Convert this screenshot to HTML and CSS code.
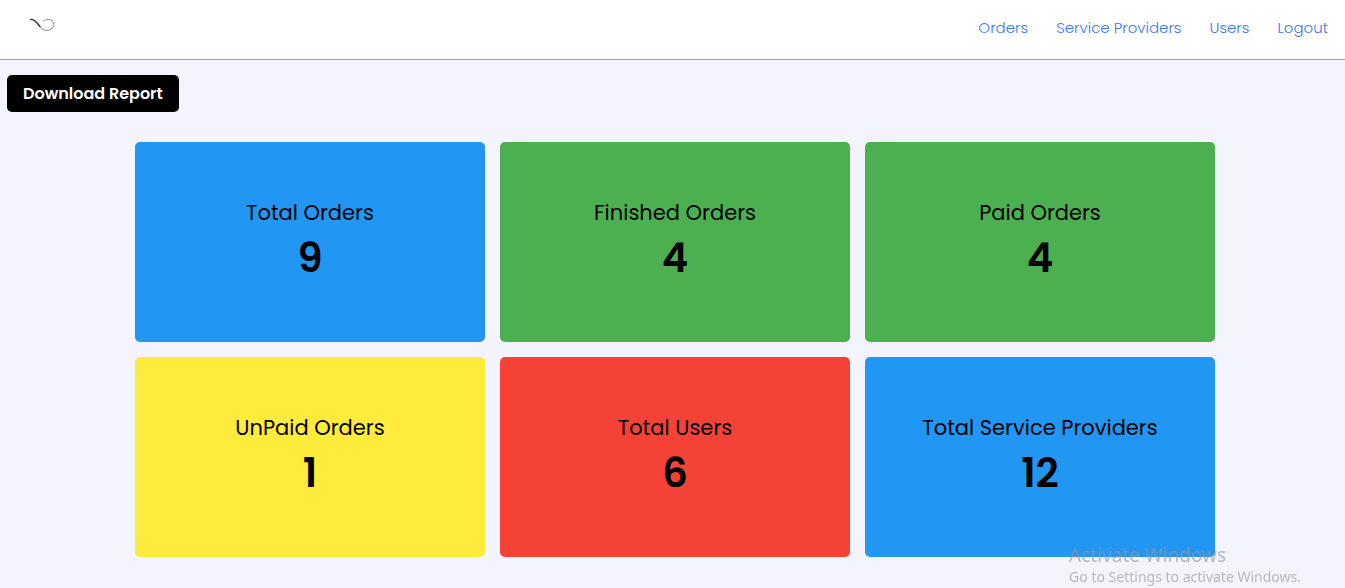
FILE: index.html
```html
<!DOCTYPE html>
<html lang="en">
<head>
  <meta charset="utf-8">
  <meta name="viewport" content="width=device-width, initial-scale=1">
  <title>Dashboard</title>
  <link rel="stylesheet" href="styles.css">
</head>
<body>
  <header class="navbar">
    <a class="logo" href="#" aria-label="Home">
      <svg width="28" height="18" viewBox="0 0 28 18" fill="none" stroke-linecap="round">
        <path d="M2.500 3.500C9 2.500 11 14.500 18.500 14.500C27.500 14.500 28 3.500 20 3.500C18 3.500 16.500 4 15.500 5" stroke="#888" stroke-width="1"/>
        <path d="M2.500 3.500C7 3 9 7 12 10.500" stroke="#333" stroke-width="1.300"/>
      </svg>
    </a>
    <nav class="links">
      <a href="#">Orders</a>
      <a href="#">Service Providers</a>
      <a href="#">Users</a>
      <a href="#">Logout</a>
    </nav>
  </header>
  <main class="content">
    <button class="download" type="button">Download Report</button>
    <section class="cards">
      <article class="card blue"><h2>Total Orders</h2><p>9</p></article>
      <article class="card green"><h2>Finished Orders</h2><p>4</p></article>
      <article class="card green"><h2>Paid Orders</h2><p>4</p></article>
      <article class="card yellow"><h2>UnPaid Orders</h2><p>1</p></article>
      <article class="card red"><h2>Total Users</h2><p>6</p></article>
      <article class="card blue"><h2>Total Service Providers</h2><p>12</p></article>
    </section>
  </main>
  <aside class="watermark">
    <p class="watermark-title">Activate Windows</p>
    <p>Go to Settings to activate Windows.</p>
  </aside>
</body>
</html>
```
FILE: styles.css
```css
* {
  box-sizing: border-box;
  margin: 0;
  padding: 0;
}

body {
  background: #f4f4fe;
  color: #000;
  font-family: Poppins, Inter, sans-serif;
}

.navbar {
  display: flex;
  justify-content: space-between;
  align-items: flex-start;
  height: 60px;
  padding: 16px 17px 0 28px;
  background: #fff;
  border-bottom: 1px solid #a0a0a8;
}

.logo svg {
  display: block;
}

.links {
  display: flex;
  gap: 28px;
}

.links a {
  color: #3b78ee;
  font-size: 15px;
  font-weight: 300;
  line-height: 24px;
  text-decoration: none;
}

.content {
  padding: 15px 0 30px 5px;
}

.download {
  display: block;
  margin-left: 2px;
  padding: 6px 16px;
  border: 0;
  border-radius: 5px;
  background: #000;
  color: #fff;
  font: inherit;
  font-size: 16px;
  font-weight: 600;
  line-height: 25px;
}

.cards {
  display: grid;
  grid-template-columns: repeat(auto-fit, 350px);
  justify-content: center;
  gap: 15px;
  max-width: 1110px;
  margin: 30px auto 0;
}

.card {
  display: flex;
  flex-direction: column;
  align-items: center;
  justify-content: center;
  min-height: 200px;
  padding-top: 2px;
  border-radius: 5px;
}

.card h2 {
  font-size: 21px;
  font-weight: 400;
  line-height: 30px;
}

.card p {
  font-size: 40px;
  font-weight: 600;
  line-height: 60px;
}

.blue { background: #2196f3; }
.green { background: #4caf50; }
.yellow { background: #ffeb3b; }
.red { background: #f44336; }

.watermark {
  position: fixed;
  right: 44px;
  bottom: 0;
  color: rgba(150, 150, 150, 0.65);
  font-family: "Segoe UI", "Noto Sans", sans-serif;
  font-size: 14px;
  line-height: 22px;
  pointer-events: none;
}

.watermark-title {
  font-size: 19px;
}
```
